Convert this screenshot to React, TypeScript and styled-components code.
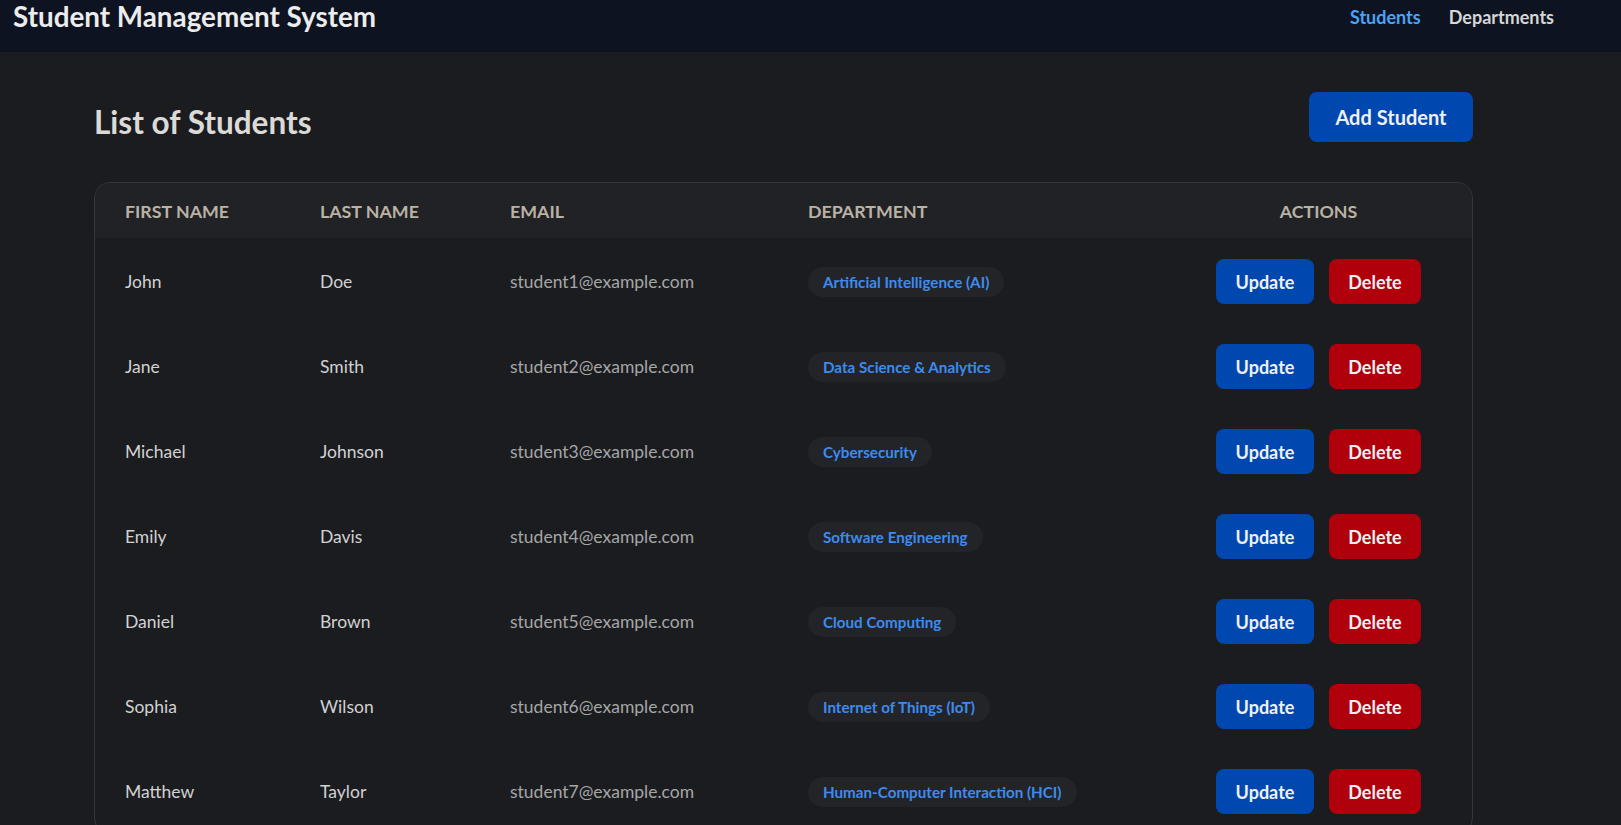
import React from "react";
import styled, { createGlobalStyle } from "styled-components";

const GlobalStyle = createGlobalStyle`
  html, body { margin: 0; padding: 0; background: #1b1c1f; }
  body { font-family: "Lato", "Open Sans", sans-serif; color: #d4d4d4; }
  * { box-sizing: border-box; }
`;

const NavBar = styled.header`
  height: 52px;
  background: #0d1320;
  display: flex;
  align-items: flex-start;
  justify-content: space-between;
  padding: 0 67px 0 13px;
`;

const Brand = styled.h1`
  margin: 0;
  font-size: 27.8px;
  line-height: 34px;
  font-weight: 700;
  color: #ececec;
`;

const NavLinks = styled.nav`
  display: flex;
  gap: 28px;
  padding-top: 5px;
`;

const NavLink = styled.a<{ $active?: boolean }>`
  font-size: 18px;
  font-weight: 700;
  line-height: 24px;
  text-decoration: none;
  color: ${(p) => (p.$active ? "#4aa3f5" : "#d6d6d6")};
`;

const Main = styled.main`
  padding: 40px 148px 0 94px;
`;

const TitleRow = styled.div`
  display: flex;
  align-items: center;
  justify-content: space-between;
  margin-bottom: 40px;
`;

const PageTitle = styled.h2`
  margin: 0;
  font-size: 31.5px;
  font-weight: 700;
  color: #dcdad6;
  padding-top: 9px;
`;

const Button = styled.button<{ $variant: "primary" | "danger"; $big?: boolean }>`
  border: none;
  border-radius: 8px;
  font-family: inherit;
  font-weight: 700;
  color: #eef0f4;
  background: ${(p) => (p.$variant === "primary" ? "#0047b0" : "#b0000b")};
  font-size: ${(p) => (p.$big ? "20px" : "18px")};
  height: ${(p) => (p.$big ? "50px" : "45px")};
  padding: 0 ${(p) => (p.$big ? "24px" : "15px")};
  cursor: pointer;
`;

const AddButton = styled(Button)`
  width: 164px;
`;

const Card = styled.div`
  border: 1px solid #35363a;
  border-radius: 16px;
  overflow: hidden;
`;

const Table = styled.table`
  width: 100%;
  border-collapse: collapse;
  table-layout: fixed;
`;

const HeadRow = styled.tr`
  background: #212225;
  height: 55px;
`;

const HeadCell = styled.th<{ $center?: boolean }>`
  text-align: ${(p) => (p.$center ? "center" : "left")};
  padding: 0 30px;
  font-size: 17.8px;
  font-weight: 700;
  color: #bab2a4;
  text-transform: uppercase;
`;

const Row = styled.tr`
  height: 85px;
`;

const Cell = styled.td<{ $muted?: boolean }>`
  padding: 2px 30px 0;
  font-size: 17.5px;
  color: ${(p) => (p.$muted ? "#a6a6a6" : "#d2d2d2")};
`;

const Badge = styled.span`
  display: inline-flex;
  align-items: center;
  height: 30px;
  padding: 0 15px;
  border-radius: 15px;
  background: #232427;
  color: #3d8bf0;
  font-size: 15.2px;
  font-weight: 700;
`;

const Actions = styled.div`
  display: flex;
  justify-content: center;
  gap: 15px;
`;

const UpdateButton = styled(Button)`
  width: 98px;
`;

const DeleteButton = styled(Button)`
  width: 92px;
`;

const students = [
  ["John", "Doe", "student1@example.com", "Artificial Intelligence (AI)"],
  ["Jane", "Smith", "student2@example.com", "Data Science & Analytics"],
  ["Michael", "Johnson", "student3@example.com", "Cybersecurity"],
  ["Emily", "Davis", "student4@example.com", "Software Engineering"],
  ["Daniel", "Brown", "student5@example.com", "Cloud Computing"],
  ["Sophia", "Wilson", "student6@example.com", "Internet of Things (IoT)"],
  ["Matthew", "Taylor", "student7@example.com", "Human-Computer Interaction (HCI)"],
];

export default function App() {
  return (
    <>
      <GlobalStyle />
      <NavBar>
        <Brand>Student Management System</Brand>
        <NavLinks>
          <NavLink $active href="#">Students</NavLink>
          <NavLink href="#">Departments</NavLink>
        </NavLinks>
      </NavBar>
      <Main>
        <TitleRow>
          <PageTitle>List of Students</PageTitle>
          <AddButton $variant="primary" $big>Add Student</AddButton>
        </TitleRow>
        <Card>
          <Table>
            <colgroup>
              <col style={{ width: 195 }} />
              <col style={{ width: 190 }} />
              <col style={{ width: 298 }} />
              <col style={{ width: 387 }} />
              <col />
            </colgroup>
            <thead>
              <HeadRow>
                <HeadCell>First Name</HeadCell>
                <HeadCell>Last Name</HeadCell>
                <HeadCell>Email</HeadCell>
                <HeadCell>Department</HeadCell>
                <HeadCell $center>Actions</HeadCell>
              </HeadRow>
            </thead>
            <tbody>
              {students.map(([first, last, email, dept]) => (
                <Row key={email}>
                  <Cell>{first}</Cell>
                  <Cell>{last}</Cell>
                  <Cell $muted>{email}</Cell>
                  <Cell>
                    <Badge>{dept}</Badge>
                  </Cell>
                  <Cell>
                    <Actions>
                      <UpdateButton $variant="primary">Update</UpdateButton>
                      <DeleteButton $variant="danger">Delete</DeleteButton>
                    </Actions>
                  </Cell>
                </Row>
              ))}
            </tbody>
          </Table>
        </Card>
      </Main>
    </>
  );
}
